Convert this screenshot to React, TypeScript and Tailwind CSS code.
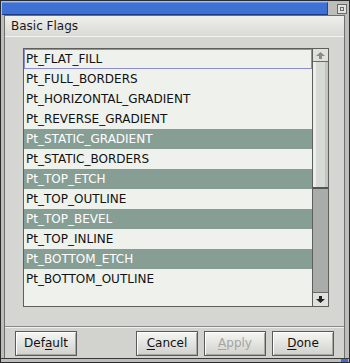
import React from "react";

const rows: { label: string; sel: boolean }[] = [
  { label: "Pt_FLAT_FILL", sel: false },
  { label: "Pt_FULL_BORDERS", sel: false },
  { label: "Pt_HORIZONTAL_GRADIENT", sel: false },
  { label: "Pt_REVERSE_GRADIENT", sel: false },
  { label: "Pt_STATIC_GRADIENT", sel: true },
  { label: "Pt_STATIC_BORDERS", sel: false },
  { label: "Pt_TOP_ETCH", sel: true },
  { label: "Pt_TOP_OUTLINE", sel: false },
  { label: "Pt_TOP_BEVEL", sel: true },
  { label: "Pt_TOP_INLINE", sel: false },
  { label: "Pt_BOTTOM_ETCH", sel: true },
  { label: "Pt_BOTTOM_OUTLINE", sel: false },
];

function Btn({ pre, u, post, disabled }: { pre: string; u: string; post: string; disabled?: boolean }) {
  return (
    <div
      className={`w-[62px] h-[25px] border border-[#5a5a5a] bg-[#e2e2de] bg-linear-to-b from-[#f6f6f3] to-[#d0d0cc] flex items-center justify-center shadow-[inset_1px_1px_0_#ffffff,inset_-1px_-1px_0_#a8a8a4] ${disabled ? "text-[#a4a4a0]" : "text-[#111]"} text-[12px]`}
    >
      <span>
        {pre}
        <span className="underline underline-offset-2">{u}</span>
        {post}
      </span>
    </div>
  );
}

export default function App() {
  return (
    <div
      className="w-[350px] h-[363px] bg-[#bdbdb9] border border-[#2a2a2a] flex flex-col overflow-hidden"
      style={{ fontFamily: '"DejaVu Sans", sans-serif' }}
    >
      {/* title bar */}
      <div className="h-[14px] shrink-0 flex items-stretch pt-px">
        <div className="flex-none w-[326px] bg-[#3f70d4] border-t border-t-[#6a95e4] border-b border-b-[#1c3a86] border-r border-r-[#24448e] ml-px" />
        <div className="flex-1 flex items-center justify-center pl-[6px]">
          <div className="w-[10px] h-[10px] border border-[#6a6a66] bg-[#e2e2de] flex items-center justify-center">
            <div className="w-[4px] h-[4px] border border-[#6a6a66]" />
          </div>
        </div>
      </div>
      {/* main framed panel */}
      <div className="flex-1 flex flex-col ml-[3px] mr-[4px] border-l border-r border-t border-[#6e6e6a] bg-[#d5d5d1]">
        <div className="h-[21px] bg-[#e4e4e0] bg-linear-to-b from-[#efefec] to-[#d9d9d5] border-b border-[#f4f4f2] flex items-center pl-[6px] text-[12px] text-[#1a1a1a]">
          Basic Flags
        </div>
        <div className="flex-1 pt-[11px] pl-[18px] pr-[15px] border-b border-[#8a8a86]">
          <div className="h-[259px] border border-[#5e5e5a] flex bg-[#eef1ec]">
            <div className="flex-1 flex flex-col">
              {rows.map((r, i) => (
                <div
                  key={r.label}
                  className={`h-[20px] flex items-center text-[12px] ${
                    r.sel ? "bg-[#879e95] text-white" : "text-[#111]"
                  } ${i === 0 ? "border border-[#8c8cd0] pl-px" : "pl-[2px]"}`}
                >
                  {r.label}
                </div>
              ))}
            </div>
            <div className="w-[16px] flex flex-col border-l border-[#5e5e5a] bg-[#a9ada9]">
              <div className="h-[13px] bg-[#e0e0dc] border-b border-[#6a6a66] flex items-center justify-center">
                <svg width="9" height="7" viewBox="0 0 9 7">
                  <path d="M4.5 0 L9 4 L6 4 L6 7 L3 7 L3 4 L0 4 Z" fill="#8a8a86" />
                </svg>
              </div>
              <div className="h-[127px] bg-[#d8dad6] shadow-[inset_3px_0_0_#eceee9,inset_-3px_0_0_#c2c4c0] border-b-2 border-[#555]" />
              <div className="flex-1" />
              <div className="h-[14px] bg-[#e0e0dc] border-t border-[#6a6a66] flex items-center justify-center">
                <svg width="9" height="7" viewBox="0 0 9 7">
                  <path d="M4.5 7 L9 3 L6 3 L6 0 L3 0 L3 3 L0 3 Z" fill="#222" />
                </svg>
              </div>
            </div>
          </div>
        </div>
        <div className="h-[31px] flex items-center pl-[10px] pr-[10px] border-t border-[#f0f0ee] bg-[#d2d2ce]">
          <Btn pre="Def" u="a" post="ult" />
          <div className="flex-1" />
          <div className="flex gap-[6px]">
            <Btn pre="" u="C" post="ancel" />
            <Btn pre="" u="A" post="pply" disabled />
            <Btn pre="" u="D" post="one" />
          </div>
        </div>
      </div>
      <div className="h-[4px] shrink-0 flex justify-end border-t border-[#3a3a3a]">
        <div className="w-[7px] h-[4px] bg-[#3f6fd0] mr-px" />
      </div>
    </div>
  );
}
